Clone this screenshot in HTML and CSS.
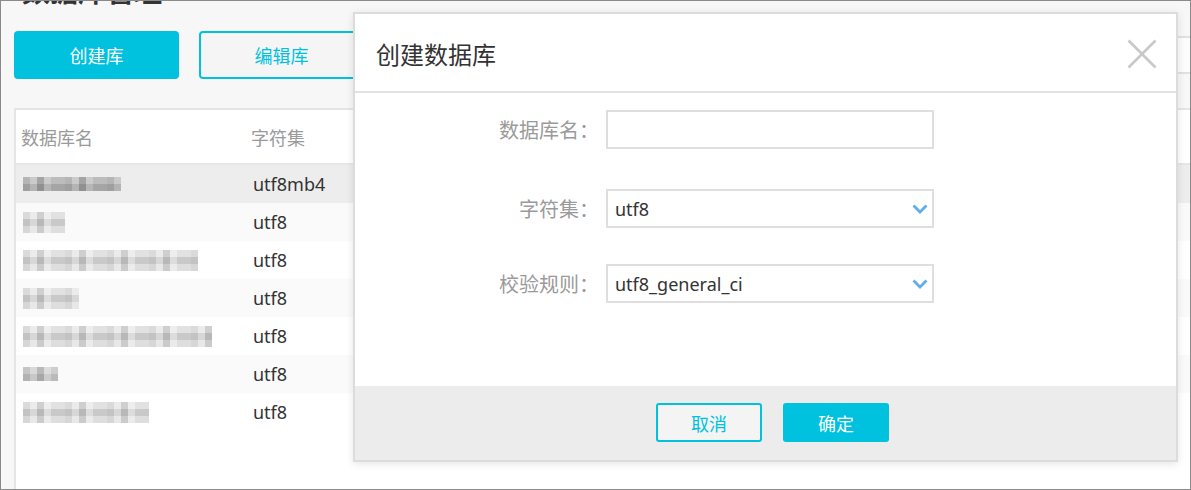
FILE: index.html
```html
<!DOCTYPE html>
<html lang="zh-CN">
<head>
<meta charset="utf-8">
<title>数据库管理</title>
<link rel="stylesheet" href="styles.css">
</head>
<body>
<div class="frame">
  <div class="page">
    <h1 class="title">数据库管理</h1>
    <div class="toolbar">
      <button class="btn btn-primary">创建库</button>
      <button class="btn btn-outline">编辑库</button>
      <div class="search"></div>
    </div>
    <div class="table">
      <div class="thead">
        <div class="cell">数据库名</div>
        <div class="cell">字符集</div>
      </div>
      <div class="row selected">
        <div class="cell"><span class="mosaic dark" style="width:98px"></span></div>
        <div class="cell val">utf8mb4</div>
      </div>
      <div class="row">
        <div class="cell"><span class="mosaic tall" style="width:42px"></span></div>
        <div class="cell val">utf8</div>
      </div>
      <div class="row">
        <div class="cell"><span class="mosaic tall" style="width:175px"></span></div>
        <div class="cell val">utf8</div>
      </div>
      <div class="row">
        <div class="cell"><span class="mosaic tall" style="width:56px"></span></div>
        <div class="cell val">utf8</div>
      </div>
      <div class="row">
        <div class="cell"><span class="mosaic tall" style="width:189px"></span></div>
        <div class="cell val">utf8</div>
      </div>
      <div class="row">
        <div class="cell"><span class="mosaic" style="width:35px"></span></div>
        <div class="cell val">utf8</div>
      </div>
      <div class="row">
        <div class="cell"><span class="mosaic tall" style="width:126px"></span></div>
        <div class="cell val">utf8</div>
      </div>
    </div>
  </div>

  <div class="modal">
    <div class="modal-header">
      <div class="modal-title">创建数据库</div>
      <svg class="close" width="30" height="30" viewBox="0 0 30 30">
        <path d="M1.5 1.5 L28.5 28.5 M28.5 1.5 L1.5 28.5" stroke="#c8c8c8" stroke-width="2.6" fill="none"/>
      </svg>
    </div>
    <div class="modal-body">
      <div class="form-row r1">
        <label class="label">数据库名：</label>
        <div class="input"></div>
      </div>
      <div class="form-row r2">
        <label class="label">字符集：</label>
        <div class="input select">
          <span>utf8</span>
          <svg class="chev" width="16" height="10" viewBox="0 0 16 10">
            <path d="M1.5 1.5 L8 8 L14.5 1.5" stroke="#5eaeea" stroke-width="2.8" fill="none"/>
          </svg>
        </div>
      </div>
      <div class="form-row">
        <label class="label">校验规则：</label>
        <div class="input select">
          <span>utf8_general_ci</span>
          <svg class="chev" width="16" height="10" viewBox="0 0 16 10">
            <path d="M1.5 1.5 L8 8 L14.5 1.5" stroke="#5eaeea" stroke-width="2.8" fill="none"/>
          </svg>
        </div>
      </div>
    </div>
    <div class="modal-footer">
      <button class="fbtn fbtn-outline">取消</button>
      <button class="fbtn fbtn-primary">确定</button>
    </div>
  </div>
</div>
</body>
</html>
```

FILE: styles.css
```css
* { box-sizing: border-box; }

body {
  margin: 0;
  font-family: "Noto Sans", "Noto Sans CJK SC", sans-serif;
  background: #ffffff;
}

.frame {
  position: relative;
  width: 1191px;
  height: 490px;
  border: 1px solid #8a8a8a;
  background: #f7f7f7;
  overflow: hidden;
}

.page {
  padding-left: 13px;
}

.title {
  margin: -24px 0 0 0;
  padding-left: 8px;
  height: 28px;
  font-size: 28px;
  line-height: 28px;
  font-weight: bold;
  color: #333;
}

.toolbar {
  display: flex;
  align-items: center;
  gap: 20px;
  margin-top: 26px;
  height: 48px;
}

.btn {
  width: 165px;
  height: 48px;
  border-radius: 4px;
  font-family: inherit;
  font-size: 18px;
  padding: 0;
  cursor: pointer;
}

.btn-primary {
  background: #00c1de;
  border: none;
  color: #fff;
}

.btn-outline {
  background: #f5f5f5;
  border: 2px solid #00c1de;
  color: #00c1de;
}

.search {
  margin-left: auto;
  margin-right: -20px;
  width: 320px;
  height: 38px;
  background: #fcfcfc;
  border: 2px solid #e0e0e0;
}

.table {
  margin-top: 29px;
  height: 400px;
  background: #fff;
  border-top: 2px solid #e5e5e5;
  border-left: 2px solid #e5e5e5;
  font-size: 18px;
}

.thead,
.row {
  display: grid;
  grid-template-columns: 230px 1fr;
  align-items: center;
}

.thead {
  height: 55px;
  border-bottom: 2px solid #e6e6e6;
  color: #9a9a9a;
}

.row {
  height: 38px;
  color: #333;
}

.row:nth-child(odd) { background: #fafafa; }
.row.selected { background: #ededed; }

.cell {
  padding-left: 5px;
  white-space: nowrap;
}

.val { padding-left: 7px; }

.mosaic {
  display: block;
  margin-left: 2px;
  height: 14px;
  background:
    repeating-linear-gradient(90deg,
      rgba(0,0,0,0.07) 0 7px,
      rgba(255,255,255,0.12) 7px 14px,
      rgba(0,0,0,0.13) 14px 21px,
      rgba(255,255,255,0.2) 21px 28px,
      rgba(0,0,0,0.03) 28px 42px),
    linear-gradient(#d4d4d4 0 50%, #c0c0c0 50% 100%);
}

.mosaic.dark {
  background:
    repeating-linear-gradient(90deg,
      rgba(0,0,0,0.08) 0 7px,
      rgba(255,255,255,0.1) 7px 14px,
      rgba(0,0,0,0.16) 14px 21px,
      rgba(255,255,255,0.12) 21px 28px,
      rgba(0,0,0,0.04) 28px 42px),
    linear-gradient(#c4c4c4 0 50%, #acacac 50% 100%);
}

.mosaic.tall {
  height: 21px;
  background:
    repeating-linear-gradient(90deg,
      rgba(0,0,0,0.05) 0 7px,
      rgba(255,255,255,0.2) 7px 14px,
      rgba(0,0,0,0.1) 14px 21px,
      rgba(255,255,255,0.3) 21px 28px,
      rgba(0,0,0,0.02) 28px 42px),
    linear-gradient(#e6e6e6 0 33%, #cdcdcd 33% 67%, #e2e2e2 67% 100%);
}

/* Modal */
.modal {
  position: absolute;
  left: 352px;
  top: 11px;
  width: 825px;
  height: 450px;
  background: #fff;
  border: 2px solid #dcdcdc;
  box-shadow: 0 2px 8px rgba(0,0,0,0.10);
  display: flex;
  flex-direction: column;
}

.modal-header {
  height: 79px;
  flex: none;
  border-bottom: 2px solid #e2e2e2;
  display: flex;
  align-items: center;
  justify-content: space-between;
  padding: 0 19px 0 21px;
}

.modal-title {
  font-size: 24px;
  color: #333;
  margin-top: 1px;
}

.close { display: block; margin-top: 2px; }

.modal-body {
  height: 293px;
  flex: none;
  padding-top: 17px;
}

.form-row {
  display: flex;
  align-items: center;
}

.form-row.r1 { margin-bottom: 40px; }
.form-row.r2 { margin-bottom: 36px; }

.label {
  width: 244px;
  margin-right: 7px;
  text-align: right;
  font-size: 20px;
  color: #9a9a9a;
}

.input {
  width: 328px;
  height: 39px;
  border: 2px solid #dfdfdf;
  background: #fff;
}

.select {
  display: flex;
  align-items: center;
  padding: 0 4px 0 7px;
  font-size: 18px;
  color: #333;
}

.chev {
  margin-left: auto;
  display: block;
}

.modal-footer {
  flex: 1;
  background: #ececec;
  padding: 17px 0 0 301px;
  display: flex;
  align-items: flex-start;
  gap: 21px;
}

.fbtn {
  width: 106px;
  height: 39px;
  border-radius: 3px;
  font-family: inherit;
  font-size: 18px;
  padding: 0;
}

.fbtn-outline {
  background: #f4f4f4;
  border: 2px solid #00c1de;
  color: #00c1de;
}

.fbtn-primary {
  background: #00c1de;
  border: none;
  color: #fff;
}
```
